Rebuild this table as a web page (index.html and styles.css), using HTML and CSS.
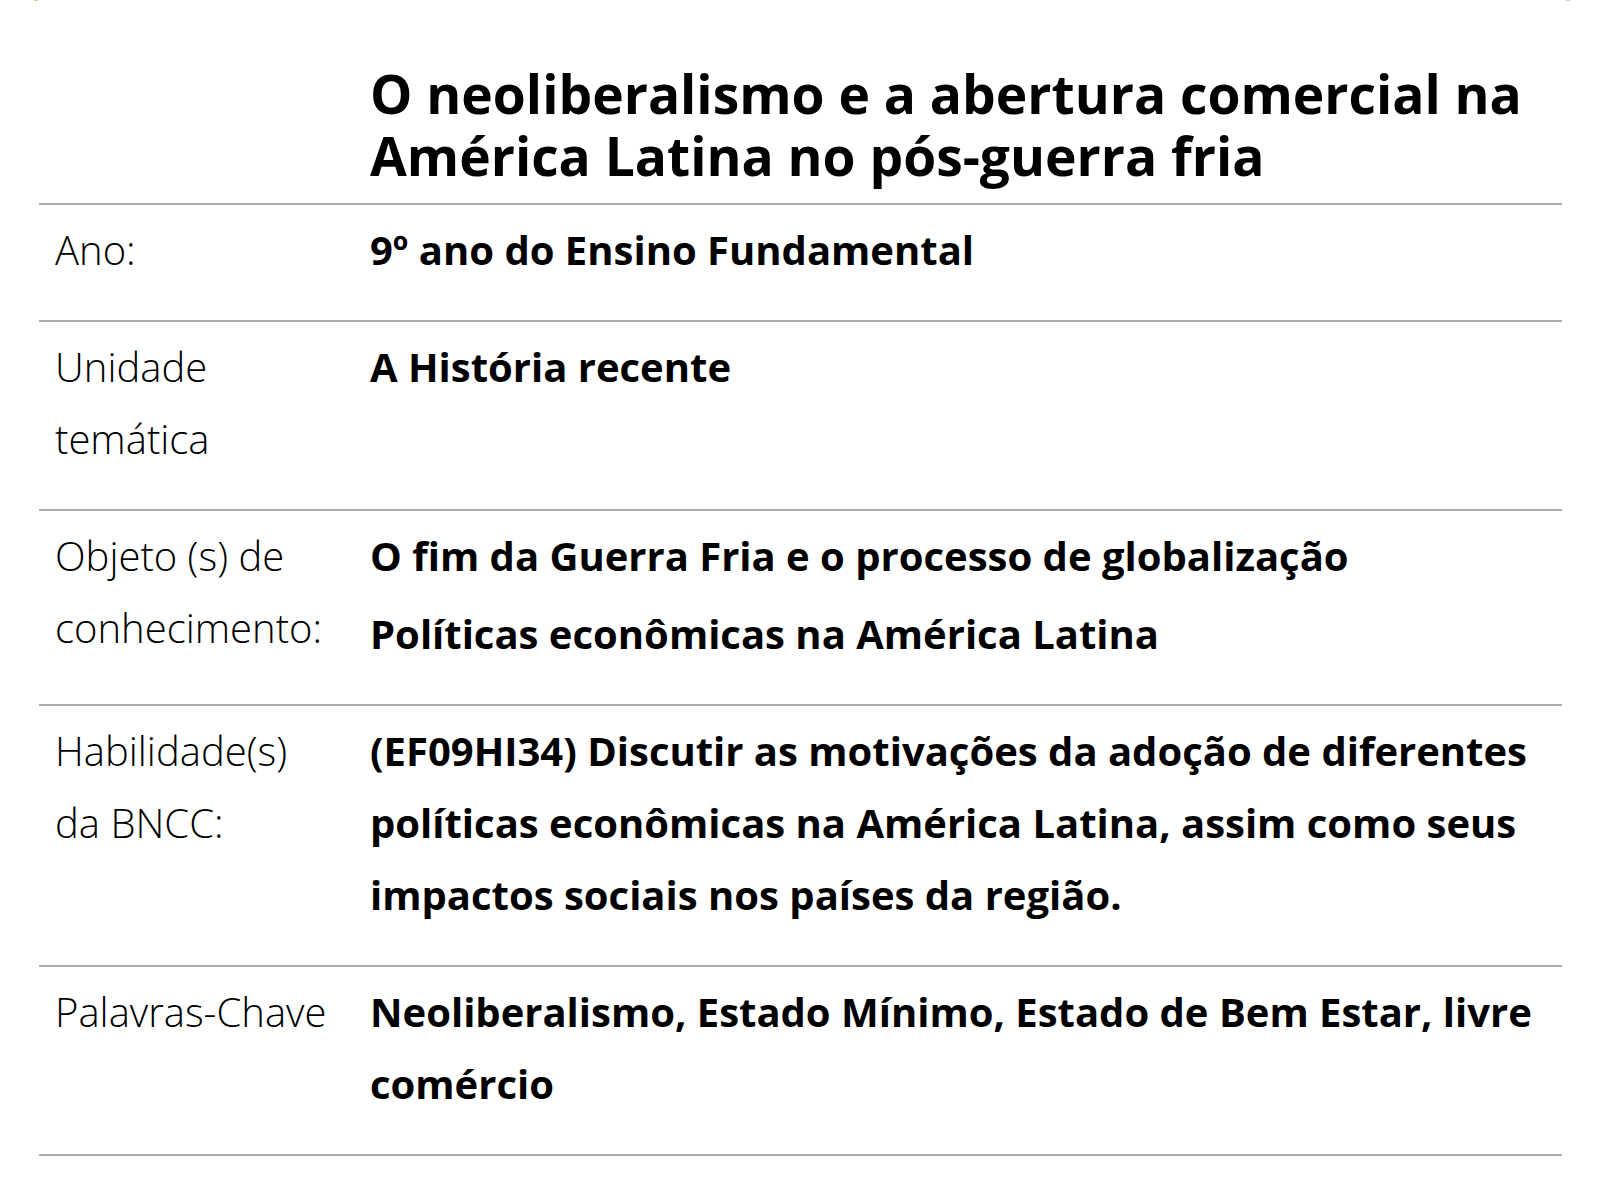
FILE: index.html
```html
<!DOCTYPE html>
<html lang="pt">
<head>
<meta charset="utf-8">
<link rel="stylesheet" href="styles.css">
</head>
<body>
<div class="top-marks"><span class="mark"></span><span class="mark"></span></div>
<div class="sheet">
  <div class="title-row">
    <div class="label-cell"></div>
    <h1 class="title">O neoliberalismo e a abertura comercial na América Latina no pós-guerra fria</h1>
  </div>
  <div class="row">
    <div class="label-cell">Ano:</div>
    <div class="value-cell"><p>9º ano do Ensino Fundamental</p></div>
  </div>
  <div class="row">
    <div class="label-cell">Unidade temática</div>
    <div class="value-cell"><p>A História recente</p></div>
  </div>
  <div class="row">
    <div class="label-cell">Objeto (s) de conhecimento:</div>
    <div class="value-cell stack">
      <p>O fim da Guerra Fria e o processo de globalização</p>
      <p>Políticas econômicas na América Latina</p>
    </div>
  </div>
  <div class="row">
    <div class="label-cell">Habilidade(s) da BNCC:</div>
    <div class="value-cell"><p>(EF09HI34) Discutir as motivações da adoção de diferentes políticas econômicas na América Latina, assim como seus impactos sociais nos países da região.</p></div>
  </div>
  <div class="row last">
    <div class="label-cell">Palavras-Chave</div>
    <div class="value-cell"><p>Neoliberalismo, Estado Mínimo, Estado de Bem Estar, livre comércio</p></div>
  </div>
</div>
</body>
</html>
```

FILE: styles.css
```css
html, body {
  margin: 0;
  padding: 0;
  background: #ffffff;
}

body {
  font-family: "Open Sans", "Noto Sans", "Liberation Sans", sans-serif;
  color: #000000;
}

.top-marks {
  display: flex;
  justify-content: space-between;
  height: 1px;
  padding: 0 30px 0 34px;
}

.mark {
  display: block;
  width: 4px;
  height: 1px;
  background: #b6e0a0;
}

.sheet {
  margin: 0 38px 0 39px;
  display: flex;
  flex-direction: column;
}

.title-row,
.row {
  display: grid;
  grid-template-columns: 331px 1fr;
}

.title-row {
  padding: 62px 0 16px;
}

.title {
  margin: 0;
  font-size: 40pt;
  line-height: 62px;
  font-weight: 700;
  padding-right: 20px;
}

.row {
  border-top: 2px solid #ababab;
  padding: 9px 0 34px;
}

.row.last {
  border-bottom: 2px solid #ababab;
}

.label-cell {
  padding-left: 16px;
  padding-right: 36px;
  font-size: 30pt;
  font-weight: 300;
  line-height: 72px;
}

.value-cell {
  font-size: 30pt;
  font-weight: 700;
  line-height: 72px;
  padding-right: 20px;
}

.value-cell p {
  margin: 0;
}

.stack {
  display: flex;
  flex-direction: column;
  gap: 6px;
}
```
